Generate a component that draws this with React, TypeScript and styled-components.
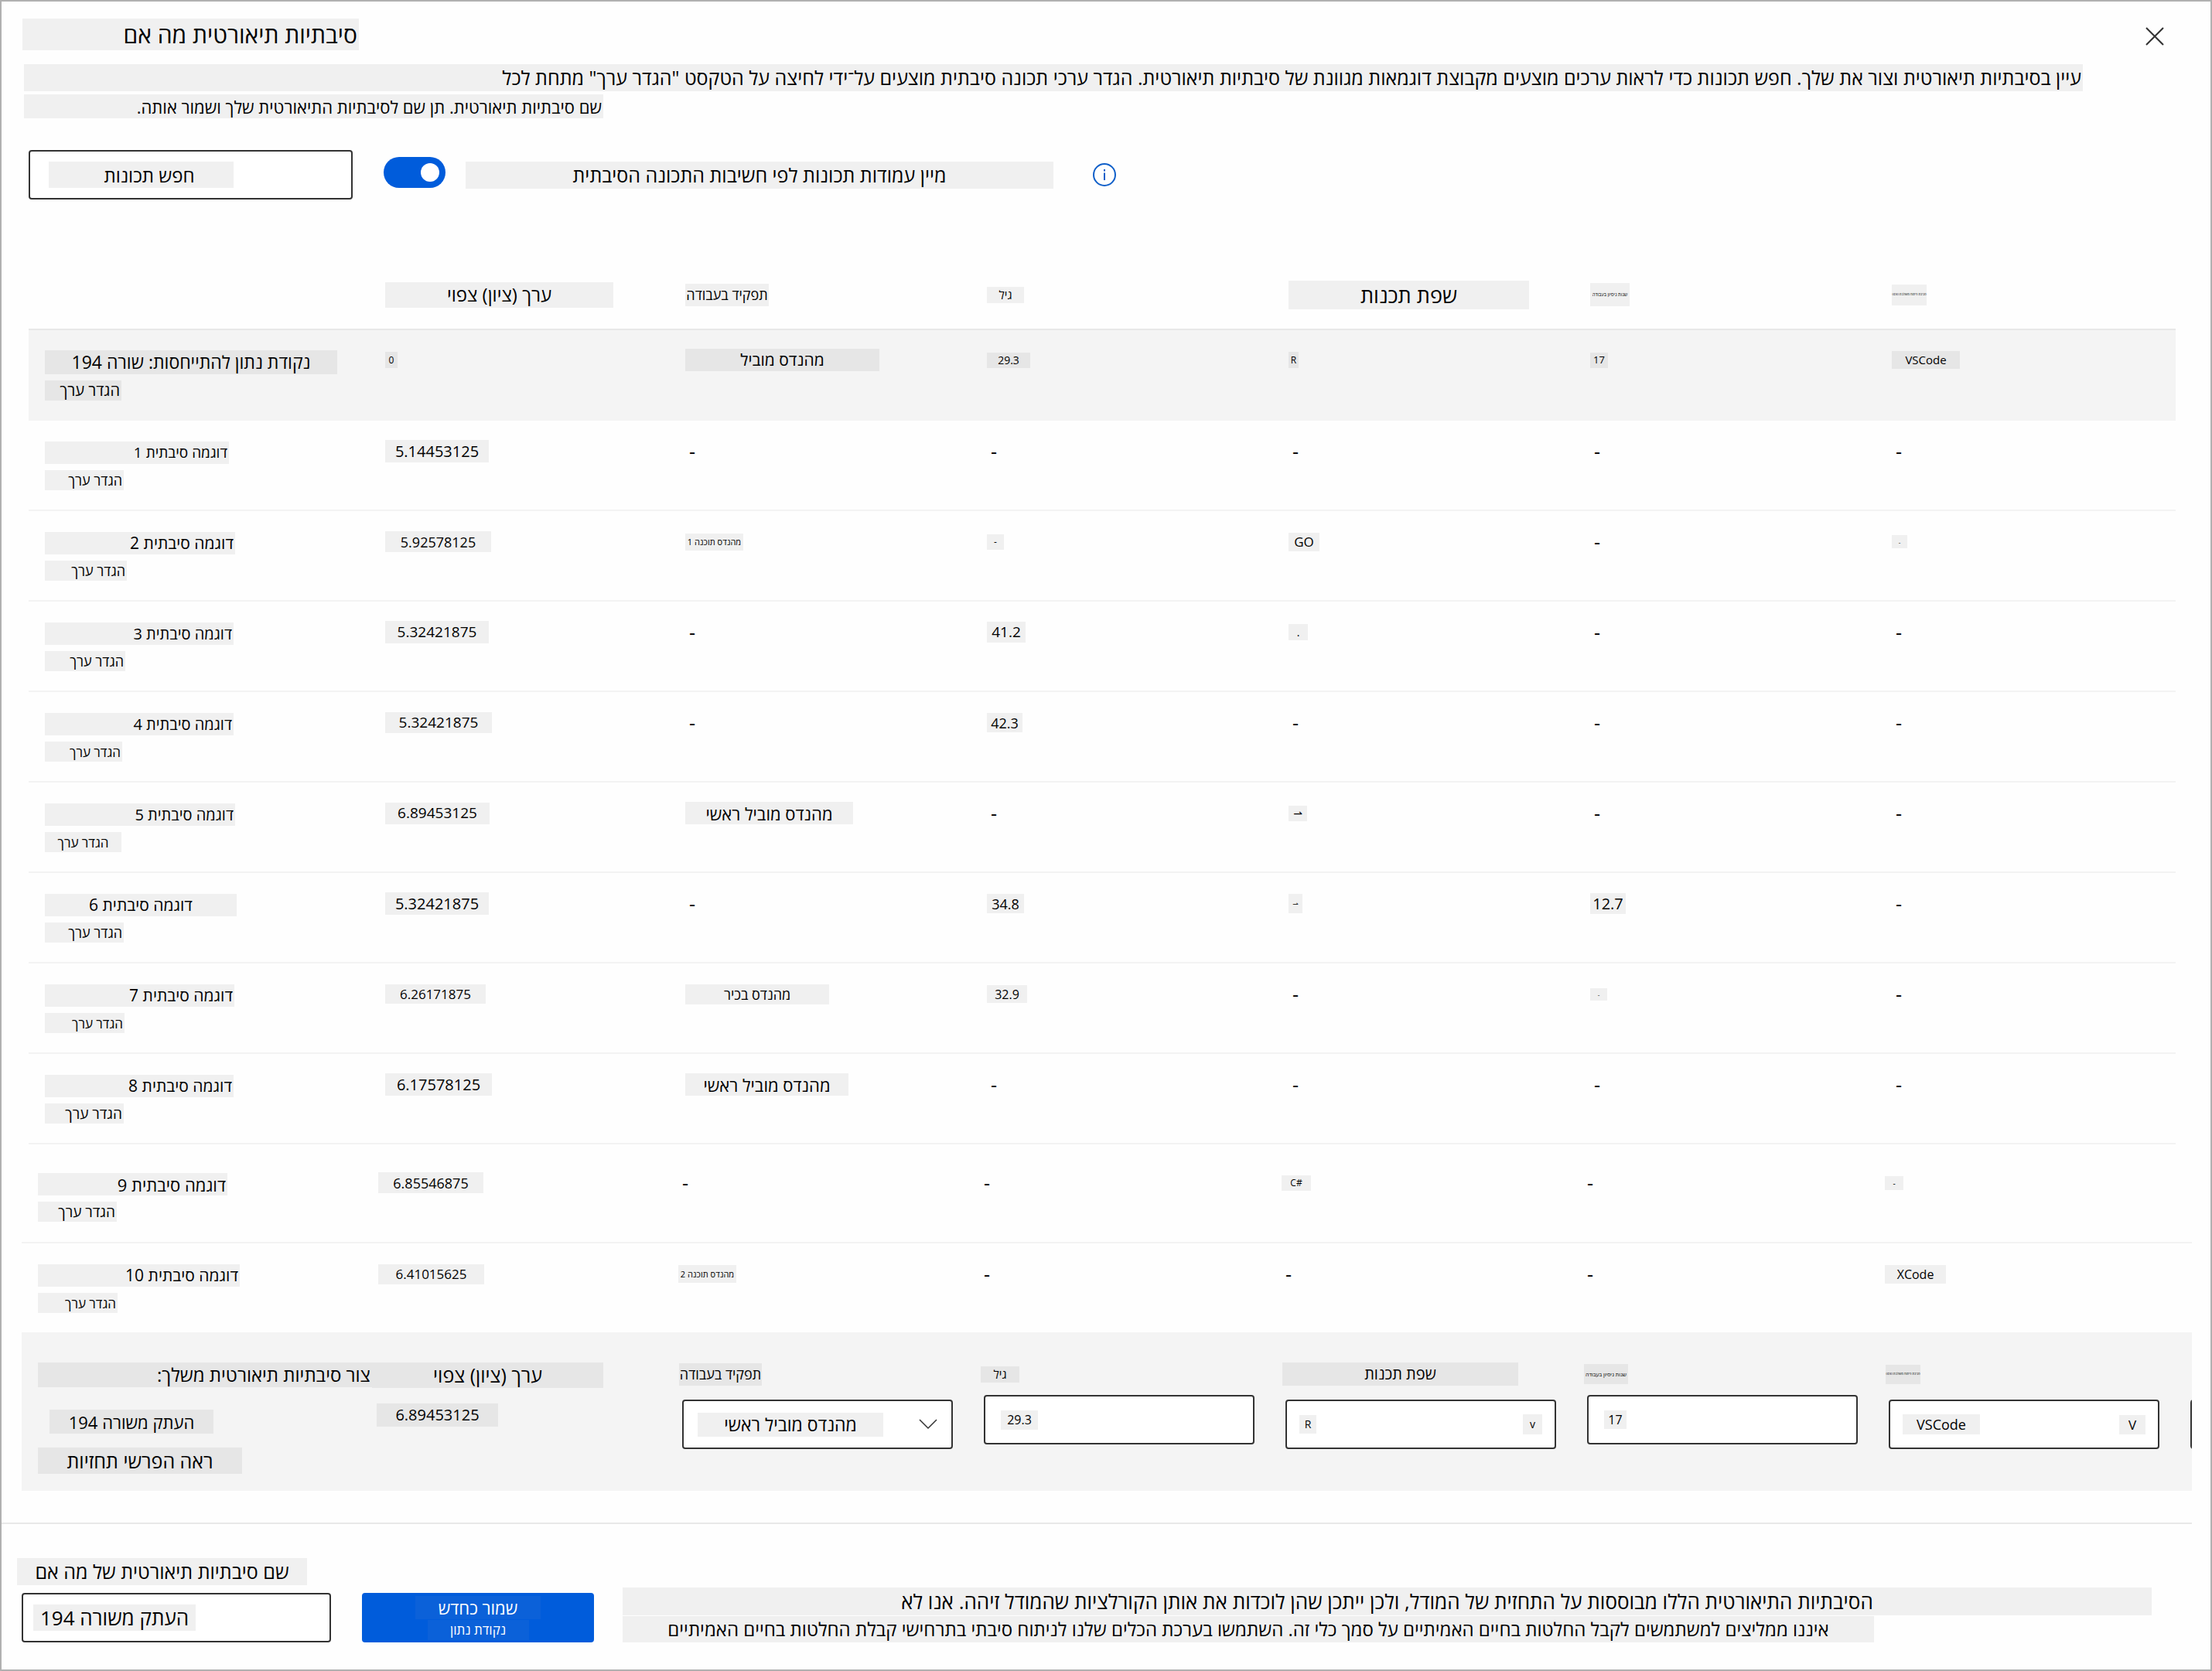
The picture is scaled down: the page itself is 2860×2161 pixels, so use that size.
import React from "react";
import styled, { createGlobalStyle, css } from "styled-components";

const GlobalStyle = createGlobalStyle`
  *, *::before, *::after { box-sizing: border-box; }
  body { margin: 0; background: #fefefe; }
  body, button, input, select {
    font-family: "Open Sans", "Noto Sans", "DejaVu Sans", sans-serif;
    color: #000;
  }
`;

type Align = "start" | "center" | "end";
type Tone = "plain" | "light" | "dark" | "blue";

const tones: Record<Tone, string> = {
  plain: "transparent",
  light: "#f0f0f0",
  dark: "#e6e6e6",
  blue: "#0b61d9",
};

interface ChipProps {
  $w?: number;
  $h?: number;
  $size?: number;
  $align?: Align;
  $tone?: Tone;
}

const chipStyle = css<ChipProps>`
  display: flex;
  align-items: center;
  justify-content: ${(p) => p.$align ?? "center"};
  width: ${(p) => (p.$w ? `${p.$w}px` : "auto")};
  height: ${(p) => p.$h ?? 29}px;
  padding: 0 2px;
  background: ${(p) => tones[p.$tone ?? "light"]};
  font-size: ${(p) => p.$size ?? 20}px;
  font-weight: 400;
  line-height: 1;
  white-space: nowrap;
`;

const Chip = styled.span<ChipProps>`
  ${chipStyle}
`;

const ChipButton = styled.button<ChipProps>`
  ${chipStyle}
  border: 0;
  cursor: pointer;
`;

const ChipInput = styled.input<ChipProps>`
  ${chipStyle}
  border: 0;
  outline: 0;
  text-align: ${(p) => p.$align ?? "center"};
  &::placeholder {
    color: #000;
    opacity: 1;
  }
`;

const ChipSelect = styled.select<ChipProps>`
  ${chipStyle}
  appearance: none;
  border: 0;
  outline: 0;
  text-align: center;
  text-align-last: center;
`;

const Dialog = styled.main`
  display: flex;
  flex-direction: column;
  border: 2px solid #b0b0b0;
  padding: 22px 0 35px;
  background: #fefefe;
  overflow: hidden;
`;

const TitleBar = styled.header`
  display: flex;
  justify-content: space-between;
  padding: 0 60px 0 27px;
`;

const Title = styled.h1<ChipProps>`
  ${chipStyle}
  margin: 0;
`;

const IconButton = styled.button`
  display: flex;
  align-items: center;
  justify-content: center;
  border: 0;
  padding: 0;
  background: none;
  cursor: pointer;
`;

const CloseButton = styled(IconButton)`
  padding-top: 4px;
`;

const Intro = styled.div`
  display: flex;
  flex-direction: column;
  gap: 4px;
  margin: 18px 165px 0 29px;
`;

const Toolbar = styled.div`
  display: flex;
  align-items: center;
  margin: 41px 35px 0;
`;

const Box = styled.div<{ $w?: number; $pad?: number }>`
  display: flex;
  align-items: center;
  justify-content: space-between;
  width: ${(p) => p.$w ?? 350}px;
  height: 64px;
  padding: 0 ${(p) => p.$pad ?? 16}px;
  border: 2px solid #333;
  border-radius: 4px;
  background: #fff;
`;

const Switch = styled.input`
  appearance: none;
  width: 80px;
  height: 40px;
  margin: 0 26px 6px 40px;
  padding: 8px;
  border-radius: 20px;
  background: #005cdb;
  cursor: pointer;
  &::before {
    content: "";
    display: block;
    width: 24px;
    height: 24px;
    margin-left: 40px;
    border-radius: 50%;
    background: #fff;
  }
`;

const SwitchLabel = styled.label<ChipProps>`
  ${chipStyle}
  margin-right: 51px;
`;

const Table = styled.table`
  table-layout: fixed;
  width: 100%;
  border-collapse: separate;
  border-spacing: 0;
`;

const TableArea = styled.div`
  margin: 79px 45px 0 35px;
`;

const WideTableArea = styled.div`
  margin: 0 24px 0 26px;
`;

const HeadCell = styled.th`
  height: 90px;
  padding: 0;
  border-bottom: 2px solid #e8e8e8;
  text-align: left;
`;

const Row = styled.tr<{ $shade?: boolean; $height: number; $top: number; $line: boolean }>`
  height: ${(p) => p.$height}px;
  background: ${(p) => (p.$shade ? "#f4f4f4" : "transparent")};
  > * {
    vertical-align: top;
    padding: ${(p) => p.$top}px 0 0;
    border-bottom: ${(p) => (p.$line ? "2px solid #f3f3f3" : "0")};
    text-align: left;
  }
`;

const NameStack = styled.div`
  display: flex;
  flex-direction: column;
  gap: 8px;
  padding: 2px 0 0 21px;
`;

const ValueLine = styled.div`
  display: flex;
  align-items: center;
  height: 29px;
`;

const Dash = styled.span`
  padding-left: 5px;
  font-size: 25px;
  line-height: 29px;
`;

const Editor = styled.section`
  display: grid;
  grid-template-columns: 432px 397px repeat(6, 390px);
  margin: 0 24px 0 26px;
  padding: 39px 0 22px 21px;
  background: #f4f4f4;
  overflow: hidden;
`;

const EditorStack = styled.div<{ $gap: number }>`
  display: flex;
  flex-direction: column;
  gap: ${(p) => p.$gap}px;
`;

const Indent = styled.div<{ $by: number }>`
  padding-left: ${(p) => p.$by}px;
`;

const Field = styled.div<{ $kind: "select" | "input" }>`
  display: flex;
  flex-direction: column;
  gap: ${(p) => (p.$kind === "select" ? 18 : 12)}px;
  ${Box} {
    margin-left: 4px;
  }
`;

const FieldLabel = styled.label`
  display: flex;
  align-items: center;
  height: 30px;
`;

const Footer = styled.footer`
  display: flex;
  align-items: flex-end;
  margin: 41px 24px 0 0;
  padding: 44px 52px 0 20px;
  border-top: 2px solid #e8e8e8;
`;

const NameField = styled.div`
  display: flex;
  flex-direction: column;
  gap: 10px;
  ${Box} {
    margin-left: 6px;
  }
`;

const NameLabel = styled.label<ChipProps>`
  ${chipStyle}
`;

const SaveButton = styled.button`
  display: flex;
  flex-direction: column;
  align-items: center;
  justify-content: center;
  gap: 1px;
  width: 300px;
  height: 64px;
  margin: 0 37px 0 40px;
  border: 0;
  border-radius: 4px;
  background: #005cdb;
  cursor: pointer;
  ${Chip} {
    color: #fff;
  }
`;

const Note = styled.div`
  display: flex;
  flex: 1;
  flex-direction: column;
  gap: 1px;
`;

interface Item {
  text: string;
  w: number;
  size: number;
  h?: number;
  align?: Align;
}
type Cell = Item | null;

const c = (text: string, w: number, size: number, h = 29, align: Align = "center"): Item => ({ text, w, size, h, align });

interface Sample {
  name: Item;
  set: Item;
  cells: Cell[];
}

const SET = "הגדר ערך";
const name = (n: number, w: number, size: number, align: Align = "end") => c(`דוגמה סיבתית ${n}`, w, size, 29, align);
const set = (w: number, size: number, align: Align = "end") => c(SET, w, size, 26, align);

const headers: Item[] = [
  c("ערך (ציון) צפוי", 295, 24, 33),
  c("תפקיד בעבודה", 108, 18, 29),
  c("גיל", 48, 15, 21),
  c("שפת תכנות", 311, 27, 37),
  c("שנות ניסיון בעבודה", 51, 6, 30),
  c("סביבת פיתוח משולבת (IDE)", 45, 4, 27),
];

const reference: Sample = {
  name: c("נקודת נתון להתייחסות: שורה 194", 378, 23, 31),
  set: set(99, 20),
  cells: [c("0", 16, 12, 21), c("מהנדס מוביל", 251, 21), c("29.3", 56, 14, 20), c("R", 13, 12, 21), c("17", 23, 13, 20), c("VSCode", 88, 15, 23)],
};

const samples: Sample[] = [
  { name: name(1, 238, 19), set: set(102, 18), cells: [c("5.14453125", 134, 20), null, null, null, null, null] },
  { name: name(2, 246, 21), set: set(106, 18), cells: [c("5.92578125", 137, 18, 27), c("מהנדס תוכנה 1", 75, 11, 22), c("-", 22, 12, 20), c("GO", 40, 17, 24), null, c("-", 20, 8, 17)] },
  { name: name(3, 244, 20), set: set(104, 18), cells: [c("5.32421875", 134, 19), null, c("41.2", 50, 19, 27), c(".", 25, 14, 21), null, null] },
  { name: name(4, 244, 20), set: set(100, 17), cells: [c("5.32421875", 138, 19, 27), null, c("42.3", 46, 18, 25), null, null, null] },
  { name: name(5, 246, 20), set: set(99, 17, "center"), cells: [c("6.89453125", 135, 19, 28), c("מהנדס מוביל ראשי", 217, 22), null, c("⇀", 24, 14, 20), null, null] },
  { name: name(6, 248, 21, "center"), set: set(102, 18), cells: [c("5.32421875", 134, 20), null, c("34.8", 48, 18, 25), c("⇀", 18, 9, 25), c("12.7", 46, 20, 27), null] },
  { name: name(7, 245, 21), set: set(103, 17), cells: [c("6.26171875", 130, 17, 25), c("מהנדס בכיר", 186, 18, 26), c("32.9", 52, 16, 23), null, c("-", 22, 8, 16), null] },
  { name: name(8, 244, 21), set: set(102, 19), cells: [c("6.17578125", 138, 20), c("מהנדס מוביל ראשי", 211, 22), null, null, null, null] },
];

const moreSamples: Sample[] = [
  { name: name(9, 245, 22), set: set(102, 19), cells: [c("6.85546875", 136, 18, 27), null, null, c("C#", 38, 12, 20), null, c("-", 24, 10, 18)] },
  { name: name(10, 261, 21), set: set(103, 17), cells: [c("6.41015625", 137, 17, 26), c("מהנדס תוכנה 2", 75, 11, 23), null, null, null, c("XCode", 79, 16, 24)] },
];

const isHebrew = (t: string) => /[\u0590-\u05ff]/.test(t);
const dirOf = (t: string) => (isHebrew(t) ? "rtl" : "ltr");

const ItemChip = ({ item, tone }: { item: Item; tone?: Tone }) => (
  <Chip $w={item.w} $h={item.h} $size={item.size} $align={item.align} $tone={tone}>
    <span dir={dirOf(item.text)}>{item.text}</span>
  </Chip>
);

const Col = styled.col<{ $w?: number }>`
  width: ${(p) => (p.$w ? `${p.$w}px` : "auto")};
`;

const Columns = () => (
  <colgroup>
    <Col $w={461} />
    <Col $w={388} />
    <Col $w={390} />
    <Col $w={390} />
    <Col $w={390} />
    <Col $w={390} />
    <Col />
  </colgroup>
);

const SampleRow = ({ sample, shade, height = 117, top = 25, line = true }: { sample: Sample; shade?: boolean; height?: number; top?: number; line?: boolean }) => {
  const tone: Tone = shade ? "dark" : "light";
  return (
    <Row $shade={shade} $height={height} $top={top} $line={line}>
      <th scope="row">
        <NameStack>
          <ItemChip item={sample.name} tone={tone} />
          <ChipButton type="button" $w={sample.set.w} $h={sample.set.h} $size={sample.set.size} $align={sample.set.align} $tone={tone}>
            <span dir="rtl">{sample.set.text}</span>
          </ChipButton>
        </NameStack>
      </th>
      {sample.cells.map((cell, i) => (
        <td key={i}>
          <ValueLine>{cell ? <ItemChip item={cell} tone={tone} /> : <Dash>-</Dash>}</ValueLine>
        </td>
      ))}
    </Row>
  );
};

const CloseIcon = () => (
  <svg width="24" height="24" viewBox="0 0 24 24" fill="none" stroke="#333" strokeWidth="2" aria-hidden="true">
    <path d="M1 1 L23 23 M23 1 L1 23" />
  </svg>
);

const InfoIcon = () => (
  <svg width="30" height="30" viewBox="0 0 30 30" fill="none" stroke="#0f5fc9" strokeWidth="2" aria-hidden="true">
    <circle cx="15" cy="15" r="14" />
    <path d="M15 12.5 V22 M15 8 V10.5" />
  </svg>
);

const ChevronIcon = () => (
  <svg width="24" height="14" viewBox="0 0 24 14" fill="none" stroke="#333" strokeWidth="1.5" aria-hidden="true">
    <path d="M1 1 L12 12 L23 1" />
  </svg>
);

export default function App() {
  return (
    <>
      <GlobalStyle />
      <Dialog>
        <TitleBar>
          <Title $w={435} $h={41} $size={30} $align="end">
            <span dir="rtl">סיבתיות תיאורטית מה אם</span>
          </Title>
          <CloseButton type="button" aria-label="סגור">
            <CloseIcon />
          </CloseButton>
        </TitleBar>

        <Intro>
          <Chip $h={35} $size={25} $align="end">
            <span dir="rtl">
              עיין בסיבתיות תיאורטית וצור את שלך. חפש תכונות כדי לראות ערכים מוצעים מקבוצת דוגמאות מגוונת של סיבתיות תיאורטית. הגדר ערכי תכונה סיבתית מוצעים על־ידי לחיצה על הטקסט "הגדר ערך" מתחת לכל
            </span>
          </Chip>
          <Chip $w={749} $h={31} $size={22} $align="end">
            <span dir="rtl">שם סיבתיות תיאורטית. תן שם לסיבתיות התיאורטית שלך ושמור אותה.</span>
          </Chip>
        </Intro>

        <Toolbar>
          <Box $w={419} $pad={24}>
            <ChipInput type="search" dir="rtl" aria-label="חפש תכונות" placeholder="חפש תכונות" $w={239} $h={34} $size={24} />
          </Box>
          <Switch type="checkbox" role="switch" id="sort" defaultChecked />
          <SwitchLabel htmlFor="sort" $w={760} $h={35} $size={25}>
            <span dir="rtl">מיין עמודות תכונות לפי חשיבות התכונה הסיבתית</span>
          </SwitchLabel>
          <IconButton type="button" aria-label="מידע">
            <InfoIcon />
          </IconButton>
        </Toolbar>

        <TableArea>
          <Table>
            <Columns />
            <thead>
              <tr>
                <HeadCell />
                {headers.map((h) => (
                  <HeadCell key={h.text} scope="col">
                    <ItemChip item={h} />
                  </HeadCell>
                ))}
              </tr>
            </thead>
            <tbody>
              <SampleRow sample={reference} shade line={false} top={24} />
              {samples.map((s) => (
                <SampleRow key={s.name.text} sample={s} />
              ))}
            </tbody>
          </Table>
        </TableArea>

        <WideTableArea>
          <Table>
            <Columns />
            <tbody>
              <SampleRow sample={moreSamples[0]} height={128} top={35} />
              <SampleRow sample={moreSamples[1]} height={115} line={false} />
            </tbody>
          </Table>
        </WideTableArea>

        <Editor>
          <EditorStack $gap={29}>
            <Chip $w={432} $h={32} $size={24} $align="end" $tone="dark">
              <span dir="rtl">צור סיבתיות תיאורטית משלך:</span>
            </Chip>
            <EditorStack $gap={18}>
              <Indent $by={15}>
                <ChipButton type="button" $w={212} $h={31} $size={22} $tone="dark">
                  <span dir="rtl">העתק משורה 194</span>
                </ChipButton>
              </Indent>
              <ChipButton type="button" $w={264} $h={34} $size={25} $tone="dark">
                <span dir="rtl">ראה הפרשי תחזיות</span>
              </ChipButton>
            </EditorStack>
          </EditorStack>
          <EditorStack $gap={20}>
            <Chip $w={299} $h={33} $size={25} $tone="dark">
              <span dir="rtl">ערך (ציון) צפוי</span>
            </Chip>
            <Indent $by={6}>
              <Chip $w={157} $h={30} $size={20} $tone="dark">
                6.89453125
              </Chip>
            </Indent>
          </EditorStack>

          <Field $kind="select">
            <FieldLabel htmlFor="role">
              <ItemChip item={c("תפקיד בעבודה", 107, 18, 29)} tone="dark" />
            </FieldLabel>
            <Box $pad={18}>
              <ChipSelect id="role" dir="rtl" $w={240} $h={31} $size={23}>
                <option>מהנדס מוביל ראשי</option>
              </ChipSelect>
              <ChevronIcon />
            </Box>
          </Field>
          <Field $kind="input">
            <FieldLabel htmlFor="age">
              <ItemChip item={c("גיל", 50, 15, 21)} tone="dark" />
            </FieldLabel>
            <Box $pad={20}>
              <ChipInput id="age" defaultValue="29.3" $w={48} $h={25} $size={16} />
            </Box>
          </Field>
          <Field $kind="select">
            <FieldLabel htmlFor="language">
              <ItemChip item={c("שפת תכנות", 305, 20, 30)} tone="dark" />
            </FieldLabel>
            <Box>
              <ChipSelect id="language" $w={22} $h={24} $size={14}>
                <option>R</option>
              </ChipSelect>
              <Chip $w={25} $h={26} $size={14}>
                v
              </Chip>
            </Box>
          </Field>
          <Field $kind="input">
            <FieldLabel htmlFor="years">
              <ItemChip item={c("שנות ניסיון בעבודה", 57, 7, 26)} tone="dark" />
            </FieldLabel>
            <Box $pad={20}>
              <ChipInput id="years" defaultValue="17" $w={29} $h={24} $size={16} />
            </Box>
          </Field>
          <Field $kind="select">
            <FieldLabel htmlFor="ide">
              <ItemChip item={c("סביבת פיתוח משולבת (IDE)", 45, 4, 25)} tone="dark" />
            </FieldLabel>
            <Box>
              <ChipSelect id="ide" $w={100} $h={26} $size={18}>
                <option>VSCode</option>
              </ChipSelect>
              <Chip $w={34} $h={25} $size={17}>
                V
              </Chip>
            </Box>
          </Field>
          <Field $kind="select" aria-hidden="true">
            <FieldLabel />
            <Box />
          </Field>
        </Editor>

        <Footer>
          <NameField>
            <NameLabel htmlFor="whatif-name" $w={375} $h={35} $size={25}>
              <span dir="rtl">שם סיבתיות תיאורטית של מה אם</span>
            </NameLabel>
            <Box $w={400} $pad={13}>
              <ChipInput id="whatif-name" dir="rtl" defaultValue="העתק משורה 194" $w={210} $h={34} $size={26} />
            </Box>
          </NameField>
          <SaveButton type="button">
            <Chip $w={162} $h={30} $size={22} $tone="blue">
              <span dir="rtl">שמור כחדש</span>
            </Chip>
            <Chip $w={131} $h={26} $size={17} $tone="blue">
              <span dir="rtl">נקודת נתון</span>
            </Chip>
          </SaveButton>
          <Note>
            <Chip $h={36} $size={26}>
              <span dir="rtl">הסיבתיות התיאורטית הללו מבוססות על התחזית של המודל, ולכן ייתכן שהן לוכדות את אותן הקורלציות שהמודל זיהה. אנו לא</span>
            </Chip>
            <Chip $w={1618} $h={34} $size={24}>
              <span dir="rtl">איננו ממליצים למשתמשים לקבל החלטות בחיים האמיתיים על סמך כלי זה. השתמשו בערכת הכלים שלנו לניתוח סיבתי בתרחישי קבלת החלטות בחיים האמיתיים</span>
            </Chip>
          </Note>
        </Footer>
      </Dialog>
    </>
  );
}
